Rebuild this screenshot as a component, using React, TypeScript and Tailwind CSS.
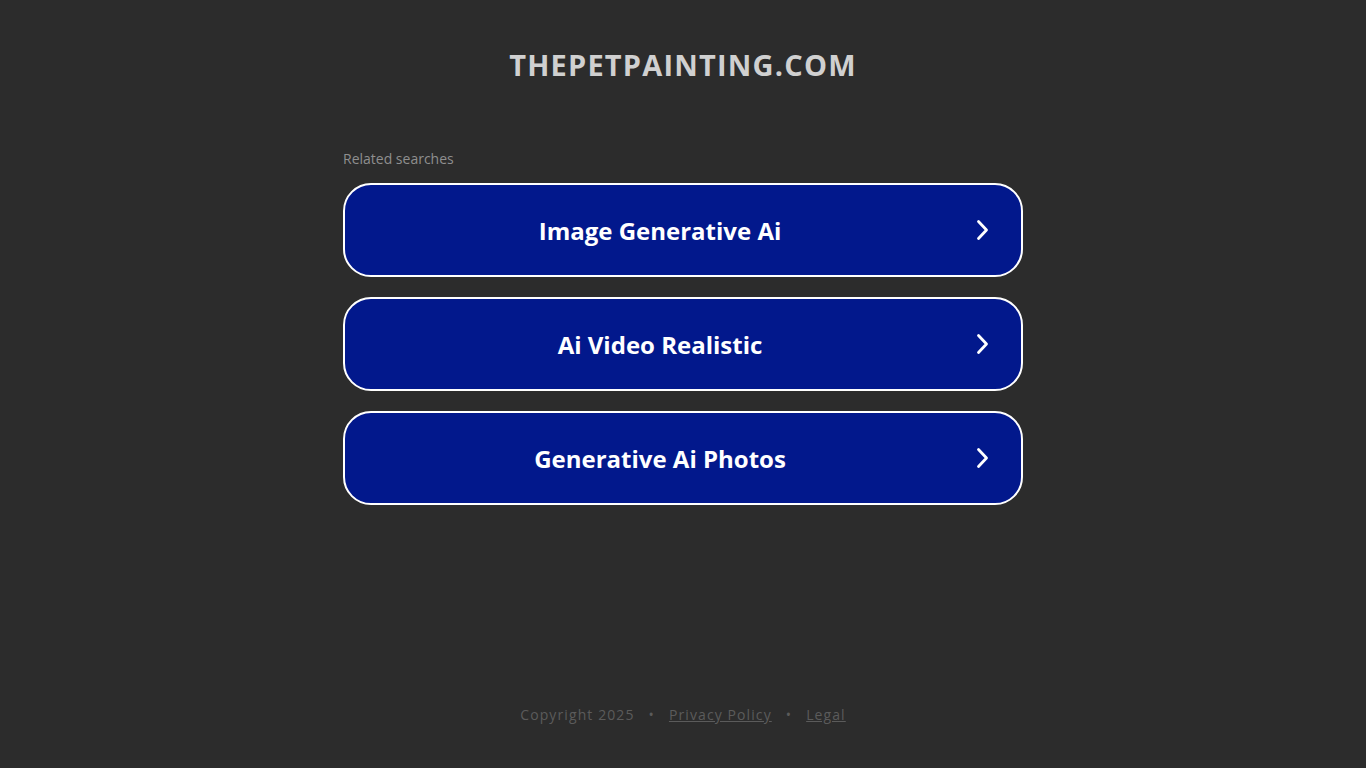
const SEARCHES = ['Image Generative Ai', 'Ai Video Realistic', 'Generative Ai Photos'];

function Chevron() {
  return (
    <svg width="16" height="22" viewBox="0 0 16 22" fill="none" className="shrink-0">
      <path d="M3.5 2.5 L11.5 11 L3.5 19.5" stroke="white" strokeWidth="2.8" strokeLinecap="round" strokeLinejoin="round" />
    </svg>
  );
}

export default function App() {
  return (
    <div
      className="flex min-h-[768px] flex-col items-center bg-[#2c2c2c]"
      style={{ fontFamily: '"Open Sans", "Noto Sans", sans-serif' }}
    >
      <h1 className="mt-[45px] text-[29px] font-bold leading-[40px] tracking-[1.2px] text-[#d0d0d0]">
        THEPETPAINTING.COM
      </h1>

      <div className="mt-[65px] w-[680px]">
        <p className="text-[14px] leading-[18px] text-[#8f8f8f]">Related searches</p>
        <div className="mt-[15px] flex flex-col gap-[20px]">
          {SEARCHES.map((s) => (
            <a
              key={s}
              href="#"
              className="flex h-[94px] items-center rounded-[28px] border-2 border-white bg-[#02188c] pr-[30px]"
            >
              <span className="flex-1 pt-[2px] text-center text-[24px] font-bold text-white">{s}</span>
              <Chevron />
            </a>
          ))}
        </div>
      </div>

      <footer className="mt-auto mb-[43px] flex items-center gap-[14px] text-[14px] tracking-[1.1px] text-[#5b5b5b]">
        <span>Copyright 2025</span>
        <span>•</span>
        <a href="#" className="underline">Privacy Policy</a>
        <span>•</span>
        <a href="#" className="underline">Legal</a>
      </footer>
    </div>
  );
}
